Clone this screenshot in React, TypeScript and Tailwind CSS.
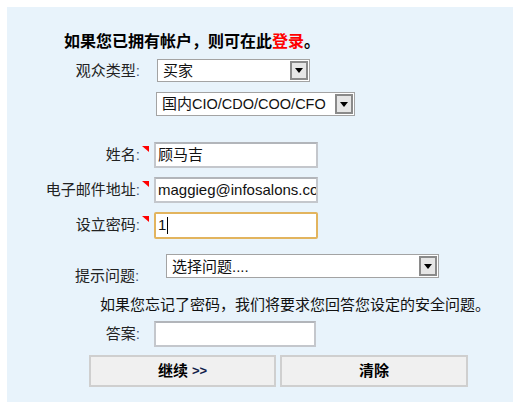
import React from "react";

const cjk = '"Liberation Sans", "Noto Sans CJK SC", sans-serif';

function Marker() {
  return (
    <svg width="7" height="6" viewBox="0 0 7 6" className="mt-[2px] shrink-0">
      <polygon points="0,0 7,0 7,6" fill="#ff0000" />
    </svg>
  );
}

function Arrow({ h }: { h: string }) {
  return (
    <div className={`flex w-[18px] ${h} shrink-0 items-center justify-center border-2 border-[#8a8a8a] bg-[#e6e6e6]`}>
      <svg width="8" height="5" viewBox="0 0 8 5">
        <polygon points="0,0 8,0 4,5" fill="#000" />
      </svg>
    </div>
  );
}

function Select({ className, children }: { className: string; children: React.ReactNode }) {
  return (
    <div className={`flex items-center justify-between border border-[#a3a3a3] bg-white p-[1px] ${className}`}>
      <div className="truncate pl-[4px] text-[15px] leading-none text-[#111]">{children}</div>
      <Arrow h="h-full" />
    </div>
  );
}

function Label({ children, w = "w-[133px]" }: { children: React.ReactNode; w?: string }) {
  return (
    <div className={`${w} shrink-0 text-right text-[15px] leading-5 text-[#222]`}>
      {children}
      <span className="text-[#4a5a80]">:</span>
    </div>
  );
}

function TextRow({ label, children, focused }: { label: string; children?: React.ReactNode; focused?: boolean }) {
  return (
    <div className="flex items-start">
      <div className="flex h-[26px] items-center">
        <Label>{label}</Label>
      </div>
      <div className="ml-[2px] w-[12px] pt-[2px]">
        <Marker />
      </div>
      <div
        className={`flex h-[26px] w-[164px] items-center overflow-hidden whitespace-nowrap bg-white px-[2px] ${
          focused ? "h-[27px] rounded-[2px] border-2 border-[#e2b45e]" : "border-2 border-[#c4c7cc] border-t-[#b2b5ba]"
        }`}
      >
        {children}
      </div>
    </div>
  );
}

export default function App() {
  return (
    <div className="h-[408px] w-[523px] bg-white pl-[7px] pt-[7px]" style={{ fontFamily: cjk }}>
      <div className="h-[395px] w-[506px] bg-[#e8f3fb] text-[#111]">
        <div className="pl-[57px] pt-[25px] text-[16px] font-bold leading-5 text-black">
          如果您已拥有帐户，则可在此<span className="text-[#ff0000]">登录</span>。
        </div>

        <div className="mt-[7px] flex items-center">
          <Label>观众类型</Label>
          <Select className="ml-[17px] h-[23px] w-[153px]">买家</Select>
        </div>

        <div className="mt-[10px] flex">
          <Select className="ml-[149px] h-[24px] w-[199px]">
            国内<span className="text-[14.5px]">CIO/CDO/COO/CFO</span>
          </Select>
        </div>

        <div className="mt-[26px] flex flex-col gap-[9px]">
          <TextRow label="姓名">
            <span className="text-[15px] text-[#111]">顾马吉</span>
          </TextRow>
          <TextRow label="电子邮件地址">
            <span className="text-[15px] text-[#111]">maggieg@infosalons.com</span>
          </TextRow>
          <TextRow label="设立密码" focused>
            <span className="text-[15px] text-[#111]">1</span>
            <span className="ml-[1px] h-[17px] w-[1px] bg-black" />
          </TextRow>
        </div>

        <div className="mt-[15px] flex items-start">
          <div className="ml-[68px] w-[70px] shrink-0 pt-[12px] text-[15px] leading-5 text-[#222]">
            提示问题<span className="text-[#4a5a80]">:</span>
          </div>
          <Select className="ml-[21px] h-[24px] w-[273px]">选择问题....</Select>
        </div>

        <div className="ml-[93px] mt-[9px] text-[15px] leading-5 text-[#111]">
          如果您忘记了密码，我们将要求您回答您设定的安全问题。
        </div>

        <div className="mt-[6px] flex items-center">
          <Label>答案</Label>
          <div className="ml-[14px] h-[26px] w-[162px] border-2 border-[#c4c7cc] border-t-[#b2b5ba] bg-white" />
        </div>

        <div className="ml-[82px] mt-[8px] flex gap-[4px]">
          <button className="flex h-[32px] w-[187px] items-center justify-center border-2 border-[#cfcfcf] bg-[#f0f0f0] text-[15px] font-bold text-black">
            继续 <span className="ml-[4px] text-[13px] text-[#10204a]">&gt;&gt;</span>
          </button>
          <button className="flex h-[32px] w-[188px] items-center justify-center border-2 border-[#cfcfcf] bg-[#f0f0f0] text-[15px] font-bold text-black">
            清除
          </button>
        </div>
      </div>
    </div>
  );
}
